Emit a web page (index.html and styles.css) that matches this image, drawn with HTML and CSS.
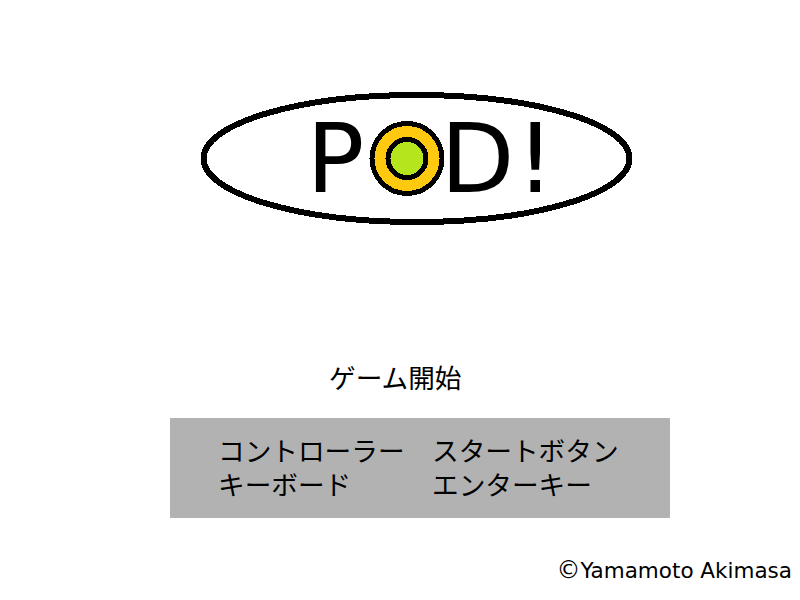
FILE: index.html
```
<!DOCTYPE html>
<html lang="ja">
<head>
<meta charset="utf-8">
<title>POD!</title>
<link rel="stylesheet" href="styles.css">
</head>
<body>
<main class="screen">
<svg class="logo" width="800" height="300" viewBox="0 0 800 300">
<ellipse class="ring" cx="416.500" cy="158.500" rx="213" ry="63.500" fill="#fff" stroke="#000" stroke-width="6"/>
<text class="logo-text" x="306.500" y="192">P</text>
<text class="logo-text" x="440.500" y="192">D</text>
<text class="logo-text" x="516" y="192">!</text>
<circle class="ring" cx="407" cy="158.500" r="35" fill="#fec90f" stroke="#000" stroke-width="5"/>
<circle class="ring" cx="407" cy="158.500" r="19" fill="#b5e61d" stroke="#000" stroke-width="5"/>
</svg>
<p class="start">ゲーム開始</p>
<div class="panel">
<div class="controls">
<span>コントローラー</span><span>スタートボタン</span>
<span>キーボード</span><span>エンターキー</span>
</div>
</div>
<p class="credit"><span class="mark">©</span>Yamamoto Akimasa</p>
</main>
</body>
</html>
```
FILE: styles.css
```
html, body { margin: 0; padding: 0; background: #fff; }
.screen {
  width: 800px; height: 600px; overflow: hidden;
  display: flex; flex-direction: column;
  font-family: "DejaVu Sans", "Noto Sans CJK JP", sans-serif; color: #000;
}
.logo { display: block; flex: none; }
.ring { shape-rendering: crispEdges; }
.logo-text { font-family: "DejaVu Sans", sans-serif; font-size: 96px; }
.start { margin: 63px 0 0 329px; font-size: 26.67px; line-height: 32px; height: 55px; }
.panel {
  width: 500px; height: 100px; margin-left: 170px; background: #b2b2b2;
  box-sizing: border-box; padding: 17px 0 0 48px;
}
.controls {
  display: grid; grid-template-columns: 214px auto;
  font-size: 26.67px; line-height: 34px;
}
.credit { margin: 38px 8px 0 0; text-align: right; font-size: 21.5px; line-height: 30px; white-space: nowrap; }
.mark { font-size: 24px; line-height: 20px; }
```
